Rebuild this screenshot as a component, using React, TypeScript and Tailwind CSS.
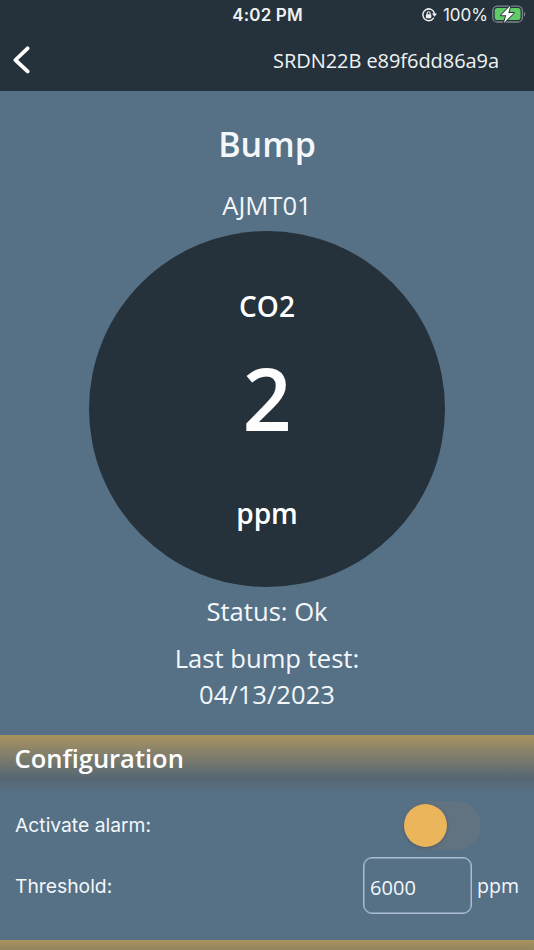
import { useState } from "react";

function RotationLock() {
  return (
    <svg width="16" height="16" viewBox="0 0 16 16" fill="none">
      <path
        d="M12.4 11.4A5.9 5.9 0 1 1 13.4 6.2"
        stroke="#eef2f5"
        strokeWidth="1.5"
        strokeLinecap="round"
      />
      <path d="M10.8 6.5h5.2l-2.4 3.3z" fill="#eef2f5" />
      <rect x="4.9" y="7.2" width="5.4" height="4.1" rx="0.7" fill="#eef2f5" />
      <path d="M6.1 7.4V6.2a1.5 1.5 0 0 1 3 0v1.2" stroke="#eef2f5" strokeWidth="1.1" />
    </svg>
  );
}

function Battery() {
  return (
    <svg width="35" height="20" viewBox="0 0 35 20" fill="none">
      <rect x="0.8" y="1.2" width="29.6" height="15.8" rx="4.6" stroke="#7b858c" strokeWidth="1.3" />
      <rect x="2.7" y="3.1" width="25.8" height="12" rx="2.8" fill="#62cb69" />
      <path d="M32 6.8c1.6.6 1.6 4.2 0 4.8z" fill="#7b858c" />
      <path
        d="M18.5 0.6 9 10.3h5.2l-2.3 7.7L21.8 7.9h-5.5z"
        fill="#fff"
        stroke="#26323b"
        strokeWidth="1.8"
        strokeLinejoin="round"
        paintOrder="stroke"
      />
    </svg>
  );
}

function Header() {
  return (
    <header className="h-[91px] bg-[#26323b] text-[#eef2f5]">
      {/* Status bar */}
      <div className="grid h-[30px] grid-cols-3 items-center pr-[7px] font-['Inter',sans-serif]">
        <span className="col-start-2 pl-[8px] text-center text-[17px] leading-[30px] font-semibold tracking-[0.15px]">
          4:02 PM
        </span>
        <div className="flex items-center justify-end">
          <RotationLock />
          <span className="ml-[6px] text-[17px] leading-[30px] whitespace-nowrap">100%</span>
          <span className="ml-[4px]">
            <Battery />
          </span>
        </div>
      </div>

      {/* Navigation */}
      <div className="flex h-[60px] items-center justify-between pr-[35px] pl-[12px]">
        <button type="button" aria-label="Back">
          <svg width="20" height="28" viewBox="0 0 20 28" fill="none">
            <path
              d="M15.6 2.3 3.4 14l12.2 11.4"
              stroke="#fff"
              strokeWidth="3.8"
              strokeLinecap="round"
              strokeLinejoin="round"
            />
          </svg>
        </button>
        <span className="pt-[2px] text-[20px] leading-[30px] tracking-[-0.06px]">SRDN22B e89f6dd86a9a</span>
      </div>
    </header>
  );
}

function Reading() {
  return (
    <main className="flex h-[644px] flex-col items-center pt-7 text-center text-[25.6px] leading-9 text-[#f3f7fa]">
      <h1 className="pt-px text-[34px] leading-[48px] font-semibold">Bump</h1>
      <p className="mt-[18px] leading-10">AJMT01</p>

      <div className="mt-[5px] flex size-[356px] flex-col items-center rounded-full bg-[#26323b] pt-[55px] text-white">
        <span className="text-[28px] leading-10 font-semibold">CO2</span>
        <span className="mt-6 text-[86px] leading-[96px] font-semibold">2</span>
        <span className="mt-[47px] text-[28px] leading-10 font-semibold">ppm</span>
      </div>

      <p className="mt-[7px]">Status: Ok</p>
      <p className="mt-[11px]">
        Last bump test:
        <br />
        04/13/2023
      </p>
    </main>
  );
}

function Configuration() {
  const [active, setActive] = useState(false);
  const [threshold, setThreshold] = useState("6000");

  return (
    <section className="h-[205px] text-[#f3f7fa]">
      <h2 className="h-[60px] bg-linear-to-b from-[#a8925f] via-[#566773] via-72% to-[#567186] pt-[5px] pl-[14.5px] text-[25.5px] leading-9 font-semibold text-white">
        Configuration
      </h2>

      <div className="flex h-[60px] items-center justify-between pr-[53px] pl-[15px]">
        <span className="font-['Inter',sans-serif] text-[19.3px]">Activate alarm:</span>
        <button
          type="button"
          role="switch"
          aria-checked={active}
          aria-label="Activate alarm"
          onClick={() => setActive(!active)}
          className={`flex h-[49px] w-[77px] items-center rounded-full bg-[#617281] ${active ? "justify-end" : ""}`}
        >
          <span className="size-[43px] rounded-full bg-[#ebb55c] shadow-[0_1px_3px_rgba(40,50,60,0.4)]" />
        </button>
      </div>

      <div className="flex h-[61px] items-center pr-[15px] pl-[15px]">
        <span className="pt-[2px] font-['Inter',sans-serif] text-[19.3px]">Threshold:</span>
        <input
          value={threshold}
          onChange={(e) => setThreshold(e.target.value)}
          className="ml-auto h-[57px] w-[109px] rounded-[9px] border border-[#a9bdd3] pt-[3px] pl-[6px] text-[20px] shadow-[inset_0_0_0_0.5px_#a9bdd3] outline-none"
        />
        <span className="ml-[5px] pt-px text-[19.5px]">ppm</span>
      </div>
    </section>
  );
}

export default function App() {
  return (
    <div className="h-[950px] w-full overflow-hidden bg-[#567186] font-['Open_Sans',sans-serif]">
      <Header />
      <Reading />
      <Configuration />
      {/* Top edge of the next section */}
      <div className="h-[10px] bg-linear-to-b from-[#a8925f] to-[#948661]" />
    </div>
  );
}
